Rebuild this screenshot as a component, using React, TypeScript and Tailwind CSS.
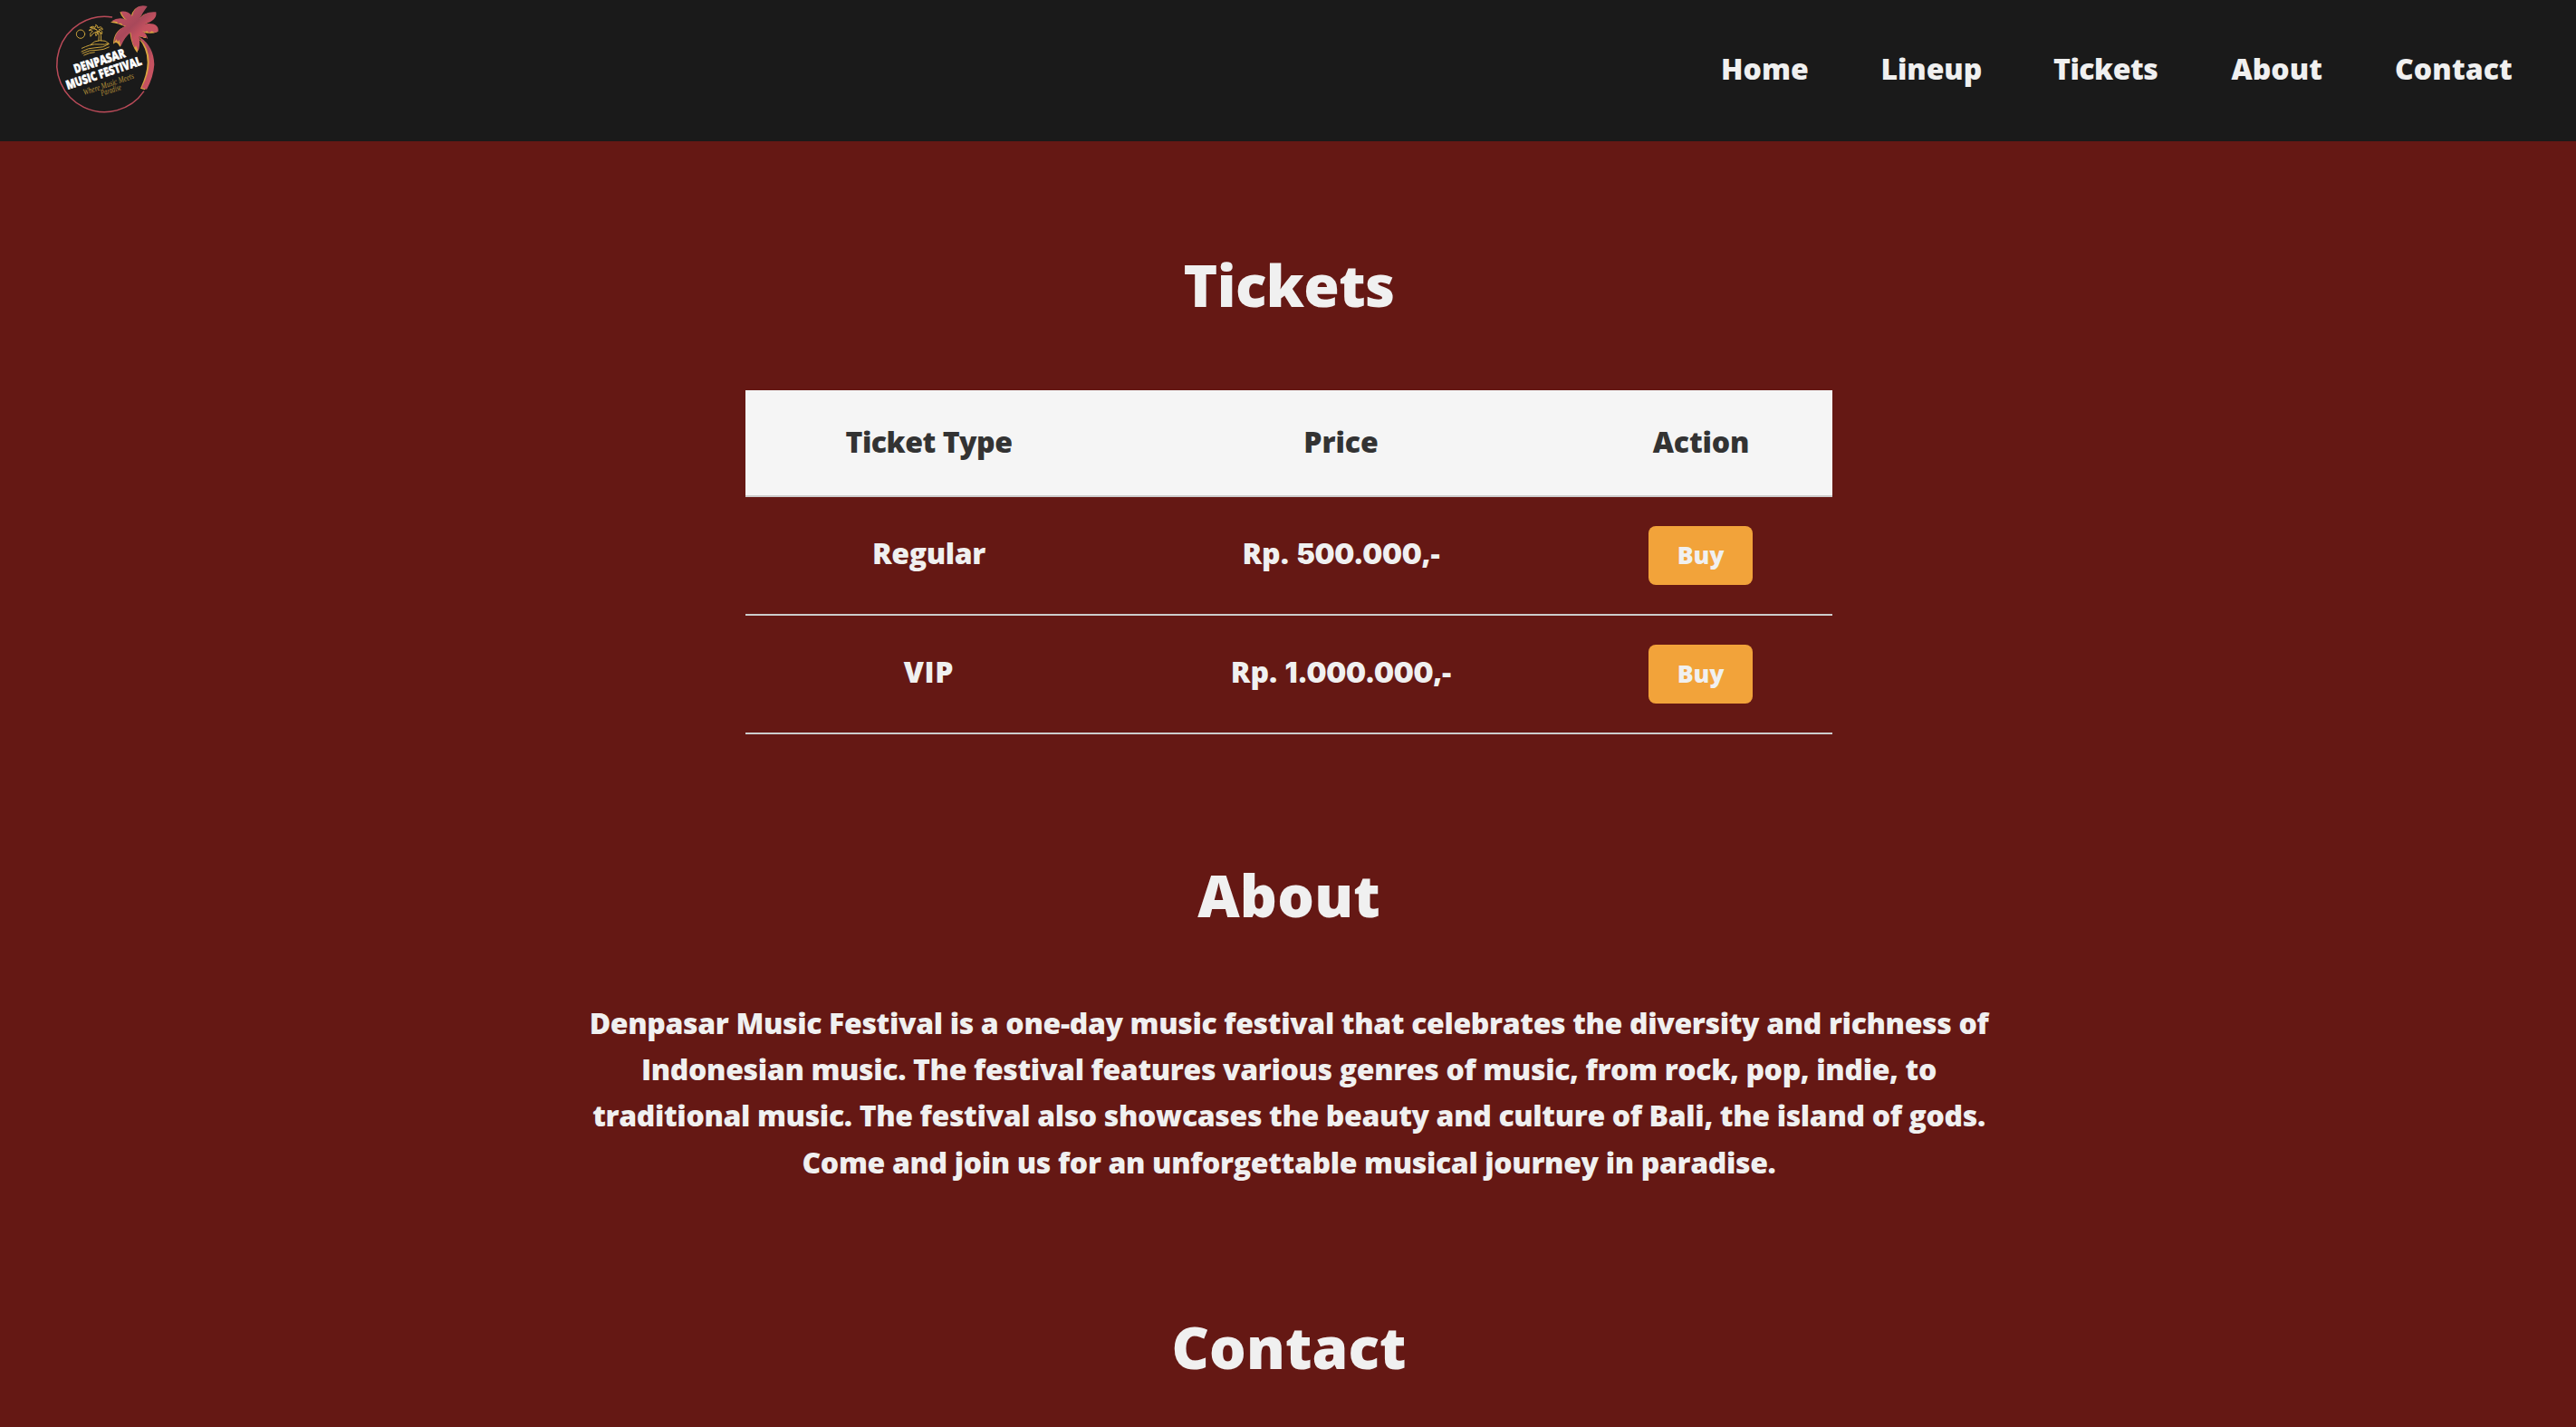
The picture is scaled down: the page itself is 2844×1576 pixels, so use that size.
const navLinks = [
  { label: 'Home', style: 'w-[96px]' },
  { label: 'Lineup', style: 'w-[110px] tracking-[-0.1px]' },
  { label: 'Tickets', style: 'w-[116px] tracking-[-0.5px]' },
  { label: 'About', style: 'w-[100px]' },
  { label: 'Contact', style: 'w-[130px] tracking-[0.1px]' },
];

const tickets = [
  { type: 'Regular', typeStyle: 'tracking-[-0.4px]', price: '500.000' },
  { type: 'VIP', typeStyle: 'tracking-[0.6px]', price: '1.000.000' },
];

function Logo() {
  return (
    <svg viewBox="0 0 480 468" className="h-[156px] w-[160px]" fill="none">
      <defs>
        <linearGradient id="palm" x1="0" y1="0" x2="1" y2="1">
          <stop offset="0" stopColor="#cb5564" />
          <stop offset="0.45" stopColor="#a8485a" />
          <stop offset="0.6" stopColor="#c4515f" />
          <stop offset="1" stopColor="#cb5564" />
        </linearGradient>
      </defs>
      <path d="M252 57 A158 158 0 1 0 357 302" stroke="#bb4b59" strokeWidth="4.5" />

      {/* sun, small palm and waves */}
      <g stroke="#c9a13b" strokeWidth="3" strokeLinecap="round" strokeLinejoin="round">
        <circle cx="147" cy="113" r="14" />
        <path d="M203 103 Q211 118 207 135 M208 101 Q218 117 215 135" />
        <path d="M201 99 Q185 90 174 101 Q184 99 187 104 Q176 108 180 121 Q187 108 200 105 Q194 114 198 119 Q204 112 204 103 Q212 103 217 113 Q222 101 208 98 Q217 92 220 98 Q217 84 204 93 Q205 84 197 82 Q200 87 195 91 Q187 84 178 91 Q190 90 201 99" />
        <path d="M180 148 Q193 134 211 134 Q231 133 240 144 Q228 149 211 147 Q194 145 176 150 Q164 154 151 160" />
        <path d="M150 171 Q172 158 198 158 Q221 159 241 146" />
        <path d="M153 177 Q177 164 201 166 Q223 166 241 156" />
        <path d="M158 183 Q176 174 193 173" />
      </g>

      {/* large palm */}
      <g transform="translate(-3 2)" fill="#d9a441">
        <path d="M341 125 Q385 155 388 214 Q386 257 363 296 L348 291 Q370 245 371 205 Q371 158 341 125Z" />
        <path d="M315 76 Q282 49 249 72 Q278 76 297 86 Q259 101 258 144 Q270 131 280 154 Q293 121 313 107 Q319 151 337 173 Q345 157 341 119 L355 121 Q366 128 368 120 Q360 112 351 102 Q379 114 404 104 Q400 78 359 79 Q394 67 395 42 Q360 36 342 63 Q354 39 366 21 Q327 11 316 55 Q304 37 280 38 Q287 61 315 76Z" />
      </g>
      <g fill="url(#palm)">
        <path d="M343 123 Q389 153 391 214 Q388 257 366 296 L349 291 Q374 245 374 205 Q374 158 341 125Z" />
        <path d="M315 76 Q282 49 249 70 L267 72 L271 78 L282 77 L286 84 L297 86 Q261 98 258 141 L266 130 L270 139 L275 132 L280 154 Q293 121 313 107 Q317 147 327 158 L330 151 L337 169 Q345 157 341 119 L351 122 L357 126 L360 121 L370 130 Q366 112 351 102 L361 106 L367 103 L374 109 L383 103 L391 108 L404 104 Q407 73 359 79 Q401 69 397 40 Q360 36 342 63 Q354 39 368 21 Q327 11 318 53 Q304 35 280 38 Q287 61 315 76Z" />
      </g>

      <g transform="rotate(-18 130 243)">
        <text x="130" y="243" textLength="176" lengthAdjust="spacingAndGlyphs" fill="#ffffff" className="font-['Open_Sans'] text-[41px] font-extrabold" stroke="#ffffff" strokeWidth="1.5">DENPASAR</text>
      </g>
      <g transform="rotate(-18.5 104 297)">
        <text x="104" y="297" textLength="262" lengthAdjust="spacingAndGlyphs" fill="#ffffff" className="font-['Open_Sans'] text-[41px] font-extrabold" stroke="#ffffff" strokeWidth="1.5">MUSIC FESTIVAL</text>
      </g>
      <g transform="rotate(-19 159 316)">
        <text x="159" y="316" textLength="176" lengthAdjust="spacingAndGlyphs" fill="#b8923a" className="font-['Liberation_Serif'] text-[29px] font-normal italic">Where Music Meets</text>
      </g>
      <g transform="rotate(-18 217 318)">
        <text x="217" y="318" textLength="70" lengthAdjust="spacingAndGlyphs" fill="#b8923a" className="font-['Liberation_Serif'] text-[29px] font-normal italic">Paradise</text>
      </g>
    </svg>
  );
}

export default function App() {
  return (
    <div className="h-[1576px] overflow-hidden bg-[#651814] font-['Open_Sans',sans-serif] text-[32px] leading-[51.2px] font-extrabold text-[#f0f0f0]">
      <header className="flex h-[156px] items-start justify-between bg-[#1a1a1a] pr-[70px] pl-[40px]">
        <Logo />
        <nav className="flex gap-[80.5px] pt-[50px]">
          {navLinks.map((link) => (
            <a key={link.label} href="#" className={`whitespace-nowrap ${link.style}`}>
              {link.label}
            </a>
          ))}
        </nav>
      </header>

      <main className="flex flex-col items-center pl-[2px] text-center">
        <section className="flex h-[655px] flex-col items-center pt-[108px]">
          <h2 className="text-[64px] leading-[102px] tracking-[-0.65px]">Tickets</h2>
          <div className="mt-[65px] w-[1200px]">
            <div className="grid h-[118px] grid-cols-[405px_505px_290px] border-b-2 border-[#cccccc] bg-[#f5f5f5] pt-[31px] text-[#333333]">
              <span className="tracking-[-0.47px]">Ticket Type</span>
              <span>Price</span>
              <span className="tracking-[-0.15px]">Action</span>
            </div>
            {tickets.map((ticket) => (
              <div key={ticket.type} className="grid h-[131px] grid-cols-[405px_505px_290px] border-b-2 border-[#cccccc]">
                <span className={`pt-[36px] ${ticket.typeStyle}`}>{ticket.type}</span>
                <span className="pt-[36px]">
                  Rp. <span className="font-['Inter'] text-[31px] leading-none font-black tracking-[-0.3px]">{ticket.price}</span>,-
                </span>
                <span className="flex justify-center pt-[32px] pr-[1px]">
                  <button className="h-[65px] w-[115px] rounded-[8px] bg-[#f2a33a] pb-px text-[26.67px] leading-[36px] tracking-[-0.2px]">
                    Buy
                  </button>
                </span>
              </div>
            ))}
          </div>
        </section>

        <section className="flex h-[497px] flex-col items-center pt-[127px]">
          <h2 className="text-[64px] leading-[102px] tracking-[0.2px]">About</h2>
          <p className="mt-[64px] tracking-[-0.365px] whitespace-nowrap">
            Denpasar Music Festival is a one-day music festival that celebrates the diversity and richness of
            <br />
            Indonesian music. The festival features various genres of music, from rock, pop, indie, to
            <br />
            traditional music. The festival also showcases the beauty and culture of Bali, the island of gods.
            <br />
            Come and join us for an unforgettable musical journey in paradise.
          </p>
        </section>

        <section className="pt-[129px]">
          <h2 className="text-[64px] leading-[102px] tracking-[0.1px]">Contact</h2>
        </section>
      </main>
    </div>
  );
}
